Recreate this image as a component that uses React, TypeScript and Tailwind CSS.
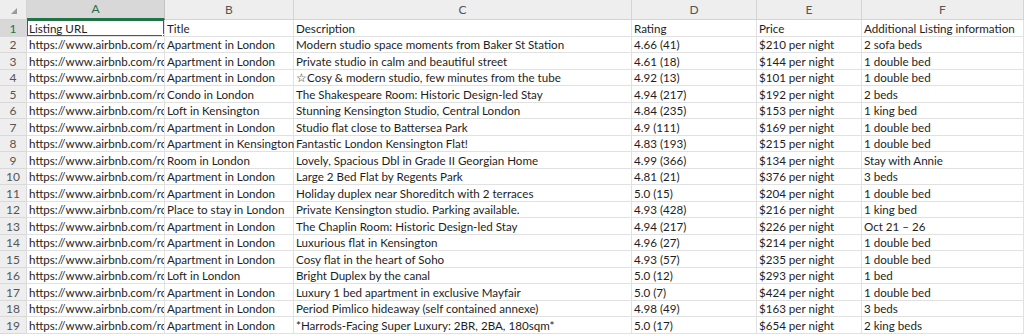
import React from "react";

const cols = ["A", "B", "C", "D", "E", "F"];

const rows: string[][] = [
  ["Listing URL", "Title", "Description", "Rating", "Price", "Additional Listing information"],
  ["https://www.airbnb.com/rooms", "Apartment in London", "Modern studio space moments from Baker St Station", "4.66 (41)", "$210 per night", "2 sofa beds"],
  ["https://www.airbnb.com/rooms", "Apartment in London", "Private studio in calm and beautiful street", "4.61 (18)", "$144 per night", "1 double bed"],
  ["https://www.airbnb.com/rooms", "Apartment in London", "☆Cosy & modern studio, few minutes from the tube", "4.92 (13)", "$101 per night", "1 double bed"],
  ["https://www.airbnb.com/rooms", "Condo in London", "The Shakespeare Room: Historic Design-led Stay", "4.94 (217)", "$192 per night", "2 beds"],
  ["https://www.airbnb.com/rooms", "Loft in Kensington", "Stunning Kensington Studio, Central London", "4.84 (235)", "$153 per night", "1 king bed"],
  ["https://www.airbnb.com/rooms", "Apartment in London", "Studio flat close to Battersea Park", "4.9 (111)", "$169 per night", "1 double bed"],
  ["https://www.airbnb.com/rooms", "Apartment in Kensington", "Fantastic London Kensington Flat!", "4.83 (193)", "$215 per night", "1 double bed"],
  ["https://www.airbnb.com/rooms", "Room in London", "Lovely, Spacious Dbl in Grade II Georgian Home", "4.99 (366)", "$134 per night", "Stay with Annie"],
  ["https://www.airbnb.com/rooms", "Apartment in London", "Large 2 Bed Flat by Regents Park", "4.81 (21)", "$376 per night", "3 beds"],
  ["https://www.airbnb.com/rooms", "Apartment in London", "Holiday duplex near Shoreditch with 2 terraces", "5.0 (15)", "$204 per night", "1 double bed"],
  ["https://www.airbnb.com/rooms", "Place to stay in London", "Private Kensington studio. Parking available.", "4.93 (428)", "$216 per night", "1 king bed"],
  ["https://www.airbnb.com/rooms", "Apartment in London", "The Chaplin Room: Historic Design-led Stay", "4.94 (217)", "$226 per night", "Oct 21 – 26"],
  ["https://www.airbnb.com/rooms", "Apartment in London", "Luxurious flat in Kensington", "4.96 (27)", "$214 per night", "1 double bed"],
  ["https://www.airbnb.com/rooms", "Apartment in London", "Cosy flat in the heart of Soho", "4.93 (57)", "$235 per night", "1 double bed"],
  ["https://www.airbnb.com/rooms", "Loft in London", "Bright Duplex by the canal", "5.0 (12)", "$293 per night", "1 bed"],
  ["https://www.airbnb.com/rooms", "Apartment in London", "Luxury 1 bed apartment in exclusive Mayfair", "5.0 (7)", "$424 per night", "1 double bed"],
  ["https://www.airbnb.com/rooms", "Apartment in London", "Period Pimlico hideaway (self contained annexe)", "4.98 (49)", "$163 per night", "3 beds"],
  ["https://www.airbnb.com/rooms", "Apartment in London", "*Harrods-Facing Super Luxury: 2BR, 2BA, 180sqm*", "5.0 (17)", "$654 per night", "2 king beds"],
];

export default function App() {
  return (
    <div
      className="w-[1024px] h-[336px] overflow-hidden bg-white text-[11.6px] text-[#1e1e1e]"
      style={{ fontFamily: "Lato, 'Open Sans', sans-serif" }}
    >
      <div className="grid grid-cols-[27px_138px_129px_338px_125px_105px_162px]">
        {/* column header row */}
        <div className="h-[20px] bg-[#eeeeee] border-r border-b border-[#d4d4d4] flex items-end justify-end pr-[9px] pb-[5px]">
          <svg width="6" height="6" viewBox="0 0 6 6">
            <polygon points="6,0 6,6 0,6" fill="#9a9a9a" />
          </svg>
        </div>
        {cols.map((c) => (
          <div
            key={c}
            className={
              "h-[20px] flex items-center justify-center border-r text-[12px] " +
              (c === "A"
                ? "bg-[#d8d8d8] text-[#217346] border-[#c2c2c2] border-b-2 border-b-[#217346]"
                : "bg-[#eeeeee] text-[#555] border-[#d4d4d4] border-b border-b-[#d4d4d4]")
            }
          >
            {c}
          </div>
        ))}

        {rows.map((r, i) => (
          <React.Fragment key={i}>
            <div
              className={
                "h-[16.5px] flex items-center justify-center pt-[2px] border-r border-b border-[#d9d9d9] text-[12px] " +
                (i === 0 ? "bg-[#d8d8d8] text-[#217346]" : "bg-[#eeeeee] text-[#555]")
              }
            >
              {i + 1}
            </div>
            {r.map((cell, j) => (
              <div
                key={j}
                className={
                  "relative h-[16.5px] flex items-center pl-[2px] pt-[2px] whitespace-nowrap border-r border-b border-[#e1e1e1] leading-none " +
                  (j === 0 ? "overflow-hidden" : "overflow-visible")
                }
              >
                {cell}
                {i === 0 && j === 0 && (
                  <>
                    <div className="absolute left-[-1px] top-[-1px] right-[-1px] bottom-[-1px] border-2 border-[#217346]" />
                    <div className="absolute right-[-3px] bottom-[-3px] w-[5px] h-[5px] bg-[#217346] border border-white" />
                  </>
                )}
              </div>
            ))}
          </React.Fragment>
        ))}
      </div>
    </div>
  );
}
